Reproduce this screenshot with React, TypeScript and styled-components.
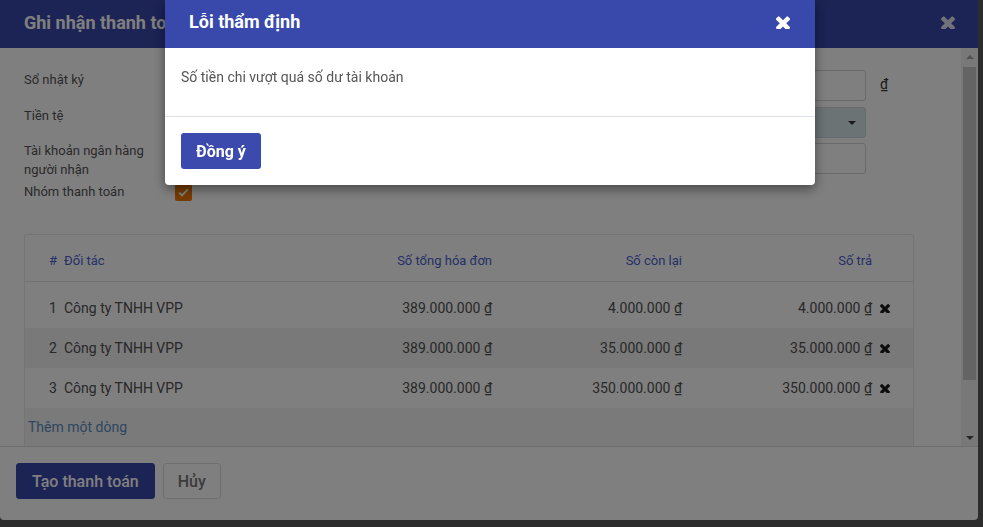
import React from "react";
import styled, { createGlobalStyle } from "styled-components";

const Global = createGlobalStyle`
  html, body { margin: 0; padding: 0; }
  body {
    background: #585858;
    font-family: Roboto, "Noto Sans", "Liberation Sans", sans-serif;
    overflow: hidden;
  }
  * { box-sizing: border-box; }
`;

const Page = styled.div`
  width: 983px;
  height: 527px;
  background: #585858;
`;

const Modal = styled.div`
  width: 978px;
  height: 520px;
  background: #fff;
  border-radius: 0 0 4px 4px;
  display: flex;
  flex-direction: column;
  overflow: hidden;
`;

const ModalHeader = styled.div`
  height: 48px;
  flex: none;
  background: #3846aa;
  display: flex;
  align-items: center;
  justify-content: space-between;
  padding: 0 23px 4px 24px;
`;

const ModalTitle = styled.div`
  color: #fff;
  font-size: 18px;
  font-weight: 700;
`;

const CloseBtn = styled.span<{ $color: string; $size: number }>`
  display: inline-flex;
  color: ${(p) => p.$color};
  svg { width: ${(p) => p.$size}px; height: ${(p) => p.$size}px; display: block; }
`;

const ModalBodyWrap = styled.div`
  flex: 1;
  display: flex;
  min-height: 0;
  border-bottom: 1px solid #dedede;
`;

const ModalBody = styled.div`
  flex: 1;
  overflow: hidden;
  padding: 19px 47px 0 24px;
`;

const FieldRow = styled.div<{ $h: number; $lp?: number }>`
  display: grid;
  grid-template-columns: 151px 691px 48px;
  height: ${(p) => p.$h}px;
  align-items: start;
  & > .lbl { padding-top: ${(p) => p.$lp ?? 3}px; }
`;

const Label = styled.div`
  font-size: 13px;
  line-height: 19px;
  color: #555;
  padding-right: 20px;
`;

const Input = styled.div<{ $filled?: boolean }>`
  margin-top: 3px;
  height: 31px;
  border: 1px solid #d0d4d8;
  border-radius: 3px;
  background: ${(p) => (p.$filled ? "#d6e6e8" : "#fff")};
  display: flex;
  align-items: center;
  justify-content: flex-end;
  padding-right: 9px;
`;

const Caret = styled.span`
  width: 0;
  height: 0;
  border-left: 4px solid transparent;
  border-right: 4px solid transparent;
  border-top: 4px solid #333;
`;

const Currency = styled.div`
  font-size: 14px;
  color: #333;
  padding: 9px 0 0 14px;
`;

const Check = styled.div`
  margin-top: 3px;
  width: 17px;
  height: 17px;
  border-radius: 2px;
  background: #f07800;
  display: flex;
  align-items: center;
  justify-content: center;
`;

const Table = styled.div`
  margin-top: 29px;
  border: 1px solid #eaeaea;
  border-bottom: none;
  border-radius: 3px 3px 0 0;
`;

const Cols = "39px 238px 190px 190px 190px 41px";

const HeadRow = styled.div`
  display: grid;
  grid-template-columns: ${Cols};
  height: 47px;
  padding-top: 5px;
  align-items: center;
  border-bottom: 1px solid #e2e2e2;
  font-size: 13px;
  color: #4a5fd0;
`;

const Rows = styled.div`
  padding-top: 6px;
`;

const Row = styled.div<{ $striped?: boolean }>`
  display: grid;
  grid-template-columns: ${Cols};
  height: 40px;
  align-items: center;
  font-size: 14px;
  color: #505050;
  background: ${(p) => (p.$striped ? "#f2f2f2" : "#fff")};
`;

const Cell = styled.div<{ $right?: boolean; $pl?: number }>`
  text-align: ${(p) => (p.$right ? "right" : "left")};
  padding-left: ${(p) => p.$pl ?? 0}px;
  white-space: nowrap;
`;

const DelCell = styled.div`
  display: flex;
  padding-left: 8px;
  color: #1a1a1a;
  svg { width: 10px; height: 10px; display: block; }
`;

const AddRow = styled.div`
  height: 40px;
  background: #f4f4f4;
  font-size: 14px;
  color: #5c8ec0;
  padding: 11px 0 0 3px;
`;

const Scrollbar = styled.div`
  width: 17px;
  flex: none;
  background: #f1f1f1;
  display: flex;
  flex-direction: column;
  align-items: center;
`;

const ArrowBtn = styled.div<{ $down?: boolean }>`
  height: 17px;
  width: 17px;
  flex: none;
  display: flex;
  align-items: center;
  justify-content: center;
  &::after {
    content: "";
    border-left: 4px solid transparent;
    border-right: 4px solid transparent;
    ${(p) => (p.$down ? "border-top: 4px solid #505050;" : "border-bottom: 4px solid #a3a3a3;")}
  }
`;

const Track = styled.div`
  flex: 1;
  width: 100%;
  padding: 2px 2px;
`;

const Thumb = styled.div`
  height: 313px;
  background: #c9c9c9;
`;

const ModalFooter = styled.div`
  height: 73px;
  flex: none;
  padding: 16px;
  display: flex;
  gap: 8px;
`;

const Button = styled.button<{ $primary?: boolean }>`
  height: 36px;
  padding: 0 ${(p) => (p.$primary ? 15 : 14)}px;
  font-family: Roboto, "Noto Sans", sans-serif;
  font-size: 16px;
  font-weight: 500;
  border-radius: 3px;
  cursor: pointer;
  border: 1px solid ${(p) => (p.$primary ? "#3846aa" : "#dcdcdc")};
  background: ${(p) => (p.$primary ? "#3846aa" : "#fff")};
  color: ${(p) => (p.$primary ? "#fff" : "#777")};
`;

const Overlay = styled.div`
  position: fixed;
  inset: 0;
  background: rgba(0, 0, 0, 0.5);
  z-index: 10;
`;

const Dialog = styled.div`
  position: fixed;
  left: 165px;
  top: 0;
  width: 650px;
  background: #fff;
  border-radius: 0 0 4px 4px;
  box-shadow: 0 4px 12px rgba(0, 0, 0, 0.45);
  z-index: 20;
  overflow: hidden;
`;

const DialogHeader = styled.div`
  height: 48px;
  background: #3949ab;
  display: flex;
  align-items: center;
  justify-content: space-between;
  padding: 0 25px 5px 24px;
`;

const DialogTitle = styled.div`
  color: #fff;
  font-size: 18px;
  font-weight: 700;
`;

const DialogBody = styled.div`
  height: 69px;
  padding: 21px 16px 0;
  font-size: 14px;
  line-height: 16px;
  color: #555;
  border-bottom: 1px solid #dee2e6;
`;

const DialogFooter = styled.div`
  padding: 16px;
  display: flex;
`;

const DialogButton = styled.button`
  height: 36px;
  padding: 0 15px;
  border: none;
  border-radius: 3px;
  background: #3b4aac;
  color: #fff;
  font-family: Roboto, "Noto Sans", sans-serif;
  font-size: 16px;
  font-weight: 700;
`;

const TimesIcon = () => (
  <svg viewBox="110 250 1188 1188" fill="currentColor">
    <path d="M1298 1322q0 40-28 68l-136 136q-28 28-68 28t-68-28l-294-294-294 294q-28 28-68 28t-68-28l-136-136q-28-28-28-68t28-68l294-294-294-294q-28-28-28-68t28-68l136-136q28-28 68-28t68 28l294 294 294-294q28-28 68-28t68 28l136 136q28 28 28 68t-28 68l-294 294 294 294q28 28 28 68z" />
  </svg>
);

const CheckIcon = () => (
  <svg width="11" height="9" viewBox="0 0 11 9">
    <path d="M1.2 4.6 L4.1 7.4 L9.8 1.4" fill="none" stroke="#fff" strokeWidth="2" />
  </svg>
);

const lines = [
  { n: 1, total: "389.000.000 ₫", rest: "4.000.000 ₫", pay: "4.000.000 ₫" },
  { n: 2, total: "389.000.000 ₫", rest: "35.000.000 ₫", pay: "35.000.000 ₫" },
  { n: 3, total: "389.000.000 ₫", rest: "350.000.000 ₫", pay: "350.000.000 ₫" },
];

export default function App() {
  return (
    <Page>
      <Global />
      <Modal>
        <ModalHeader>
          <ModalTitle>Ghi nhận thanh toán</ModalTitle>
          <CloseBtn $color="rgba(255,255,255,0.85)" $size={14}>
            <TimesIcon />
          </CloseBtn>
        </ModalHeader>
        <ModalBodyWrap>
          <ModalBody>
            <FieldRow $h={37}>
              <Label className="lbl">Sổ nhật ký</Label>
              <Input />
              <Currency>₫</Currency>
            </FieldRow>
            <FieldRow $h={36} $lp={2}>
              <Label className="lbl">Tiền tệ</Label>
              <Input $filled>
                <Caret />
              </Input>
            </FieldRow>
            <FieldRow $h={41} $lp={1}>
              <Label className="lbl">Tài khoản ngân hàng người nhận</Label>
              <Input />
            </FieldRow>
            <FieldRow $h={24} $lp={1}>
              <Label className="lbl">Nhóm thanh toán</Label>
              <Check>
                <CheckIcon />
              </Check>
            </FieldRow>
            <Table>
              <HeadRow>
                <Cell $pl={24}>#</Cell>
                <Cell>Đối tác</Cell>
                <Cell $right>Số tổng hóa đơn</Cell>
                <Cell $right>Số còn lại</Cell>
                <Cell $right>Số trả</Cell>
                <Cell />
              </HeadRow>
              <Rows>
                {lines.map((l) => (
                  <Row key={l.n} $striped={l.n === 2}>
                    <Cell $pl={24}>{l.n}</Cell>
                    <Cell>Công ty TNHH VPP</Cell>
                    <Cell $right>{l.total}</Cell>
                    <Cell $right>{l.rest}</Cell>
                    <Cell $right>{l.pay}</Cell>
                    <DelCell>
                      <TimesIcon />
                    </DelCell>
                  </Row>
                ))}
              </Rows>
              <AddRow>Thêm một dòng</AddRow>
            </Table>
          </ModalBody>
          <Scrollbar>
            <ArrowBtn />
            <Track>
              <Thumb />
            </Track>
            <ArrowBtn $down />
          </Scrollbar>
        </ModalBodyWrap>
        <ModalFooter>
          <Button $primary>Tạo thanh toán</Button>
          <Button>Hủy</Button>
        </ModalFooter>
      </Modal>
      <Overlay />
      <Dialog>
        <DialogHeader>
          <DialogTitle>Lỗi thẩm định</DialogTitle>
          <CloseBtn $color="#fff" $size={14}>
            <TimesIcon />
          </CloseBtn>
        </DialogHeader>
        <DialogBody>Số tiền chi vượt quá số dư tài khoản</DialogBody>
        <DialogFooter>
          <DialogButton>Đồng ý</DialogButton>
        </DialogFooter>
      </Dialog>
    </Page>
  );
}
